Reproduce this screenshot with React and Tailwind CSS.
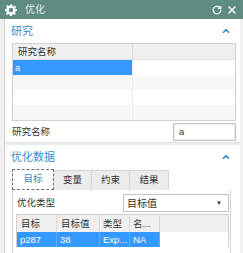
import React from 'react'
import { ChevronUp, X, RotateCw } from 'lucide-react'

const font = { fontFamily: '"Liberation Sans", "Noto Sans CJK SC", sans-serif' }

const Gear = () => (
  <svg width="12" height="12" viewBox="0 0 24 24">
    <path
      fill="white"
      fillRule="evenodd"
      d="M10 1h4l.6 3.2 2 .9 2.7-1.9 2.8 2.8-1.9 2.7.9 2L24 10v4l-3.2.6-.9 2 1.9 2.7-2.8 2.8-2.7-1.9-2 .9L14 24h-4l-.6-3.2-2-.9-2.7 1.9-2.8-2.8 1.9-2.7-.9-2L0 14v-4l3.2-.6.9-2-1.9-2.7 2.8-2.8 2.7 1.9 2-.9zM12 7.5a4.5 4.5 0 1 0 0 9 4.5 4.5 0 0 0 0-9z"
    />
  </svg>
)

const SectionHeader = ({ title }) => (
  <div className="flex items-center justify-between h-[24px] pl-[6px] pr-[5px]">
    <span className="text-[11px] text-[#3a8ccb]">{title}</span>
    <ChevronUp className="h-[10px] w-[10px] text-[#2f7fc0]" strokeWidth={4} />
  </div>
)

const studyRows = [
  { name: 'a', selected: true },
  { name: '' },
  { name: '' },
  { name: '' },
]

const App = () => {
  return (
    <div className="w-[243px] h-[253px] bg-[#f0f0f0] overflow-hidden text-[9.5px] text-[#333]" style={font}>
      {/* title bar */}
      <div className="h-[19px] bg-[#5e8b82] flex items-center pl-[5px] pr-[5px] text-white">
        <Gear />
        <span className="ml-[8px] text-[10px] text-[#e4eeeb]">优化</span>
        <div className="ml-auto flex items-center gap-[4px]">
          <RotateCw className="h-[10px] w-[10px]" strokeWidth={3} />
          <X className="h-[12px] w-[12px]" strokeWidth={3} />
        </div>
      </div>

      <div className="ml-[4px] w-[236px] border-l border-[#d2d2d2]">
        {/* 研究 */}
        <div className="bg-white h-[123px] pr-[4px]">
          <SectionHeader title="研究" />
          <div className="ml-[7px] w-[224px] border border-[#d0d0d0]">
            <div className="flex h-[16px] bg-[#efefef] border-b border-[#e2e2e2]">
              <div className="w-[120px] border-r border-[#d8d8d8] pl-[5px] leading-[16px]">研究名称</div>
              <div className="flex-1" />
            </div>
            {studyRows.map((r, i) => (
              <div key={i} className={`flex h-[15px] ${i % 2 === 1 ? 'bg-[#f7f7f7]' : 'bg-white'}`}>
                <div
                  className={`w-[120px] border-r border-[#ececec] pl-[2px] leading-[15px] ${
                    r.selected ? 'bg-[#3399ff] text-white' : ''
                  }`}
                >
                  {r.name}
                </div>
                <div className="flex-1" />
              </div>
            ))}
          </div>
          <div className="flex items-center justify-between mt-[2px] pl-[7px]">
            <span>研究名称</span>
            <div className="w-[63px] h-[18px] border border-[#c4c4c4] shadow-[inset_0_0_0_1px_#ececec] pl-[5px] leading-[16px]">
              a
            </div>
          </div>
        </div>

        <div className="h-[3px] bg-[#ececec] border-t border-[#e0e0e0]" />

        {/* 优化数据 */}
        <div className="bg-white h-[108px] pr-[4px]">
          <SectionHeader title="优化数据" />
          <div className="ml-[7px]">
            <div className="flex h-[21px] items-end">
              <div className="w-[42px] h-[21px] bg-white border border-dashed border-[#707070] text-[#3a8ccb] flex items-center justify-center">
                目标
              </div>
              <div className="w-[38px] h-[20px] bg-[#ececec] border-t border-r border-[#d4d4d4] flex items-center justify-center">
                变量
              </div>
              <div className="w-[38px] h-[20px] bg-[#ececec] border-t border-r border-[#d4d4d4] flex items-center justify-center">
                约束
              </div>
              <div className="w-[39px] h-[20px] bg-[#ececec] border-t border-r border-[#d4d4d4] flex items-center justify-center">
                结果
              </div>
            </div>
            <div className="w-[219px] h-[70px] border-l border-r border-[#d4d4d4] pl-[3px] pr-[1px]">
              <div className="flex items-center justify-between pt-[4px] h-[22px]">
                <span className="ml-[1px]">优化类型</span>
                <div className="w-[106px] h-[18px] border border-[#c4c4c4] flex items-center pl-[3px] pr-[6px]">
                  <span className="text-[10px]">目标值</span>
                  <span className="ml-auto text-[6px] leading-none">▼</span>
                </div>
              </div>
              <div className="mt-[2px] border border-[#d0d0d0] border-b-0">
                <div className="flex h-[17px] bg-[#efefef] leading-[17px]">
                  <div className="w-[40px] border-r border-[#d8d8d8] pl-[4px]">目标</div>
                  <div className="w-[43px] border-r border-[#d8d8d8] pl-[4px]">目标值</div>
                  <div className="w-[30px] border-r border-[#d8d8d8] pl-[3px] whitespace-nowrap overflow-hidden">类型</div>
                  <div className="w-[30px] border-r border-[#d8d8d8] pl-[3px]">名...</div>
                  <div className="flex-1" />
                </div>
                <div className="flex h-[15px] leading-[15px] text-white">
                  <div className="w-[40px] bg-[#3399ff] border-r border-[#5aaeff] pl-[3px]">p287</div>
                  <div className="w-[43px] bg-[#3399ff] border-r border-[#5aaeff] pl-[3px]">38</div>
                  <div className="w-[30px] bg-[#3399ff] border-r border-[#5aaeff] pl-[3px]">Exp...</div>
                  <div className="w-[30px] bg-[#3399ff] border-r border-[#5aaeff] pl-[3px]">NA</div>
                  <div className="flex-1 bg-white" />
                </div>
              </div>
            </div>
          </div>
        </div>
      </div>
    </div>
  )
}

export default App
